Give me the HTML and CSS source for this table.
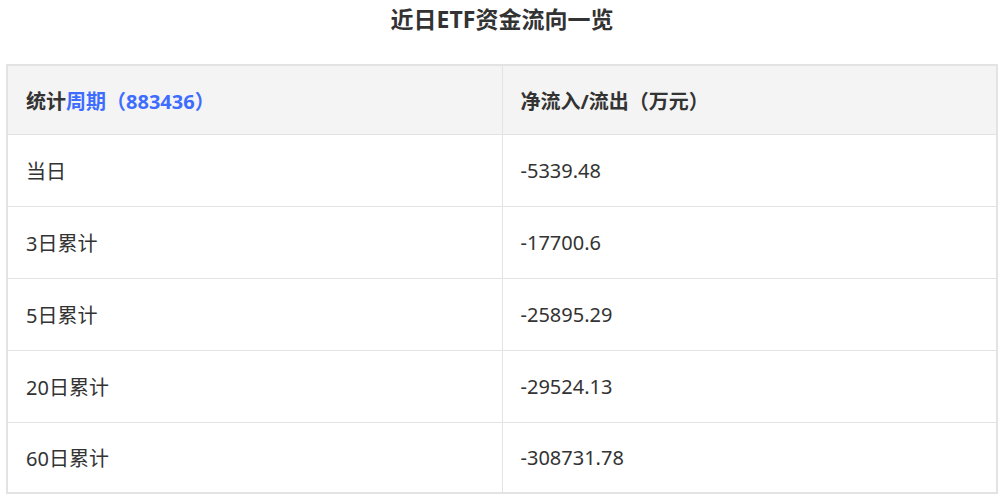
FILE: index.html
```html
<!DOCTYPE html>
<html lang="zh">
<head>
<meta charset="utf-8">
<link rel="stylesheet" href="styles.css">
</head>
<body>
<div class="page">
  <h1 class="title">近日ETF资金流向一览</h1>
  <table class="flow">
    <thead>
      <tr>
        <th>统计<span class="link">周期（883436）</span></th>
        <th>净流入/流出（万元）</th>
      </tr>
    </thead>
    <tbody>
      <tr><td>当日</td><td>-5339.48</td></tr>
      <tr><td>3日累计</td><td>-17700.6</td></tr>
      <tr><td>5日累计</td><td>-25895.29</td></tr>
      <tr><td>20日累计</td><td>-29524.13</td></tr>
      <tr class="last"><td>60日累计</td><td>-308731.78</td></tr>
    </tbody>
  </table>
</div>
</body>
</html>
```

FILE: styles.css
```css
html, body {
  margin: 0;
  padding: 0;
  background: #ffffff;
}
body {
  font-family: "Noto Sans", "Noto Sans CJK SC", sans-serif;
  color: #333333;
}
.page {
  padding: 0 6px;
}
.title {
  margin: 0;
  height: 38px;
  line-height: 38px;
  text-align: center;
  font-size: 23px;
  font-weight: bold;
  color: #333333;
}
.flow {
  width: 100%;
  margin-top: 26px;
  border-collapse: collapse;
  border: 2px solid #e3e3e3;
  table-layout: fixed;
  font-size: 20px;
}
.flow th, .flow td {
  border: 1px solid #e3e3e3;
  text-align: left;
  padding: 0 0 0 18px;
  height: 71px;
}
.flow th {
  background: #f4f4f4;
  font-weight: bold;
  height: 68px;
}
.flow td {
  font-weight: normal;
}
.flow .last td {
  height: 69px;
}
.link {
  color: #3d6cff;
}
```
